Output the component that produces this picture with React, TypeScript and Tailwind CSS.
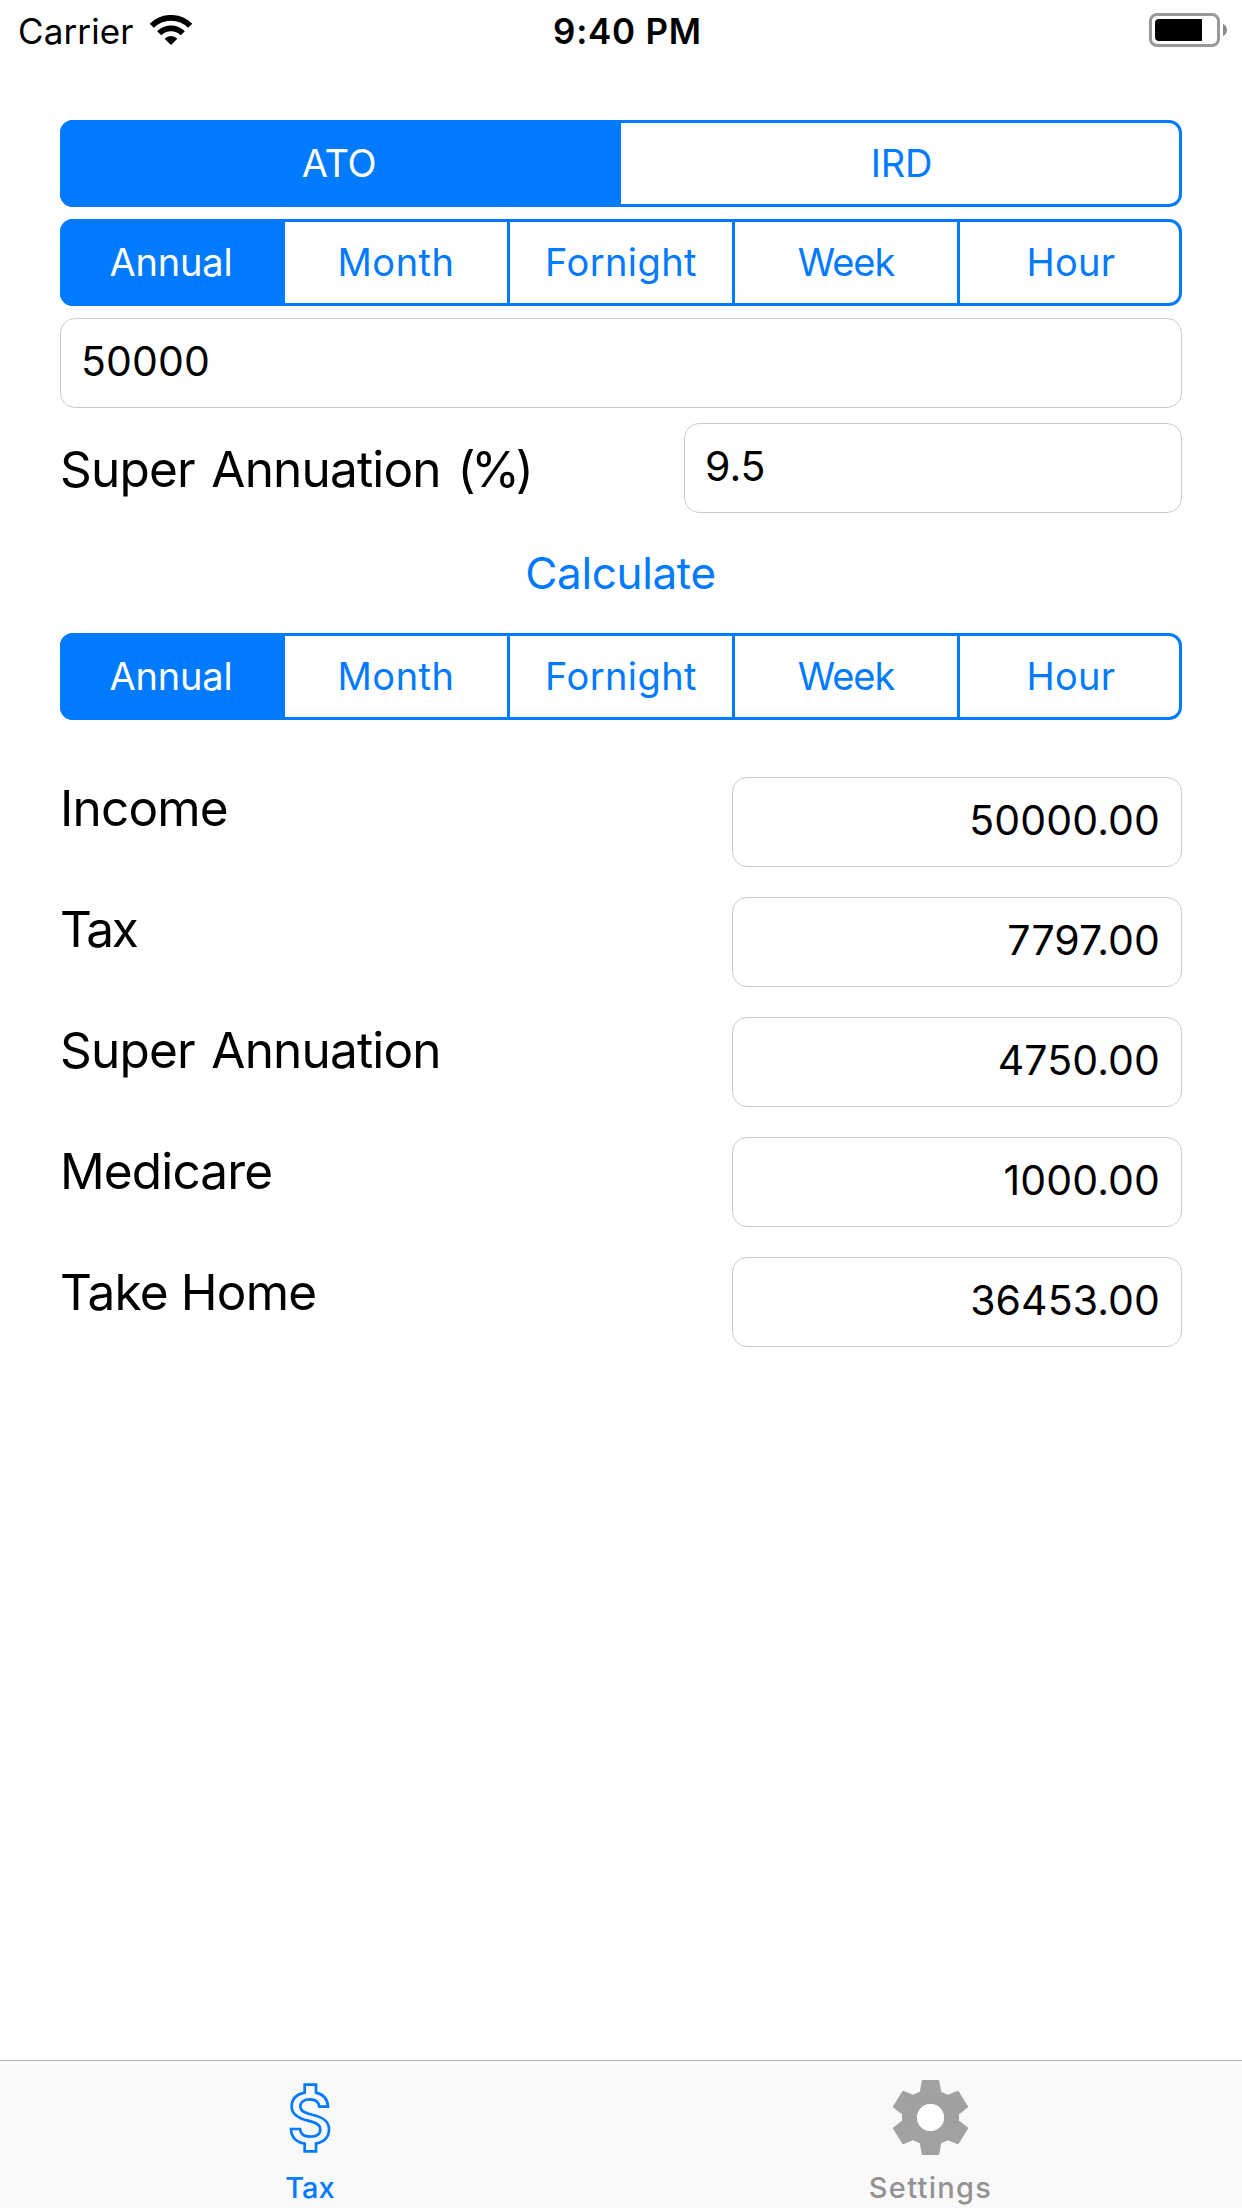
import { Fragment } from "react";
import clsx from "clsx";

type Option = { label: string; tracking: string };

const authorities: Option[] = [
  { label: "ATO", tracking: "tracking-[-0.35px]" },
  { label: "IRD", tracking: "tracking-[-0.2px]" },
];

const periods: Option[] = [
  { label: "Annual", tracking: "tracking-[-0.16px]" },
  { label: "Month", tracking: "tracking-[0.5px]" },
  { label: "Fornight", tracking: "tracking-[0.41px]" },
  { label: "Week", tracking: "tracking-[-1px]" },
  { label: "Hour", tracking: "tracking-[0.27px]" },
];

const results = [
  { label: "Income", value: "50000.00", tracking: "tracking-[-0.8px]" },
  { label: "Tax", value: "7797.00", tracking: "tracking-[-2.2px]" },
  { label: "Super Annuation", value: "4750.00", tracking: "tracking-[-0.82px] [word-spacing:3.5px]" },
  { label: "Medicare", value: "1000.00", tracking: "tracking-[-0.86px]" },
  { label: "Take Home", value: "36453.00", tracking: "tracking-[-0.82px]" },
];

function WifiIcon() {
  return (
    <svg className="h-[30px] w-[42px]" viewBox="0 0 126 90" fill="none" stroke="black" strokeWidth="17.5">
      <path d="M5.4 32.4A81.5 81.5 0 0 1 120.6 32.4" />
      <path d="M27.6 54.6A50 50 0 0 1 98.4 54.6" />
      <path d="M63 90L43.9 70.9A27 27 0 0 1 82.1 70.9Z" fill="black" stroke="none" />
    </svg>
  );
}

function Battery() {
  return (
    <div className="flex items-center gap-[3px]">
      <div className="h-[34px] w-[71px] rounded-[8px] border-[3px] border-[#999999] p-[3px]">
        <div className="h-full w-[47px] rounded-l-[4px] bg-black" />
      </div>
      <svg className="h-3 w-1" viewBox="0 0 4 12">
        <path d="M0 0C5.3 2 5.3 10 0 12Z" fill="#888888" />
      </svg>
    </div>
  );
}

function StatusBar() {
  return (
    <header className="grid h-[62px] grid-cols-[553px_1fr_auto] items-center pr-[15px] text-[35px]">
      <div className="flex items-center pl-[18px]">
        <span className="tracking-[0.13px]">Carrier</span>
        <span className="-mt-0.5 ml-4">
          <WifiIcon />
        </span>
      </div>
      <span className="font-semibold tracking-[0.75px]">9:40 PM</span>
      <div className="-mt-[2px]">
        <Battery />
      </div>
    </header>
  );
}

function Segmented({ options, className }: { options: Option[]; className?: string }) {
  return (
    <div
      className={clsx(
        "flex h-[87px] overflow-hidden rounded-[13px] text-[38px] text-[#007aff] inset-shadow-[0_0_0_3px_#007aff]",
        className,
      )}
    >
      {options.map((option, i) => (
        <Fragment key={option.label}>
          {i > 0 && <div className="w-[3px] shrink-0 bg-[#007aff]" />}
          <button
            className={clsx(
              "flex items-center justify-center",
              options.length === 2 && i === 0 ? "w-[558px]" : "min-w-0 flex-1",
              option.tracking,
              i === 0 && "bg-[#007aff] text-white",
            )}
          >
            {option.label}
          </button>
        </Fragment>
      ))}
    </div>
  );
}

function Field({ value, className }: { value: string; className?: string }) {
  return (
    <div
      className={clsx(
        "flex h-[90px] items-center rounded-[15px] border border-[#cccccc] pr-[21px] pb-0.5 pl-5 text-[41px]",
        className,
      )}
    >
      {value}
    </div>
  );
}

function DollarIcon() {
  return (
    <svg className="h-[72px] w-[44px]" viewBox="146 126 132 216" fill="none" stroke="#007aff" strokeWidth="8">
      <path d="M196 134H230V158C252 163 265 178 266 200H240C238 186 228 178 212 178C194 178 183 186 183 199C183 212 192 217 210 222L221 225C256 233 269 246 269 268C269 292 254 306 230 311V334H196V311C172 307 156 292 155 267H182C184 282 194 290 212 290C232 290 243 282 243 268C243 255 234 249 214 244L206 242C170 233 157 219 157 200C157 178 172 163 196 158Z" />
    </svg>
  );
}

function GearIcon() {
  return (
    <svg className="size-[75px]" viewBox="0 0 225 225">
      <path
        fill="#a1a1a1"
        stroke="#a1a1a1"
        strokeWidth="8"
        strokeLinejoin="round"
        fillRule="evenodd"
        d="M90 4H135L141 38L165 49L194 37L221 80L194 101V124L221 145L194 188L165 176L141 187L135 221H90L84 187L60 176L31 188L4 145L31 124V101L4 80L31 37L60 49L84 38ZM112.5 68A44.5 44.5 0 1 0 112.5 157A44.5 44.5 0 1 0 112.5 68Z"
      />
      <circle cx="112.5" cy="112.5" r="40.5" fill="white" />
    </svg>
  );
}

export default function App() {
  return (
    <div className="flex h-[2208px] w-[1242px] flex-col bg-white font-['Inter',sans-serif] text-black">
      <StatusBar />
      <main className="flex flex-1 flex-col px-[60px] pt-[58px]">
        <Segmented options={authorities} />
        <Segmented options={periods} className="mt-3" />
        <Field value="50000" className="mt-3 tracking-[0.1px]" />
        <div className="mt-[15px] flex items-center justify-between">
          <span className="pt-0.5 text-[49.5px] tracking-[-0.82px] [word-spacing:3.5px]">
            Super Annuation <span className="tracking-[-4.1px]">(%)</span>
          </span>
          <Field value="9.5" className="w-[498px]" />
        </div>
        <button className="h-[120px] pr-px text-[44px] tracking-[-0.35px] text-[#007aff]">Calculate</button>
        <Segmented options={periods} />
        <div className="mt-[57px] flex justify-between">
          <div className="flex flex-col gap-[59px]">
            {results.map((row) => (
              <span key={row.label} className={clsx("text-[49.5px] leading-[62px]", row.tracking)}>
                {row.label}
              </span>
            ))}
          </div>
          <div className="flex w-[450px] flex-col gap-[30px]">
            {results.map((row) => (
              <Field key={row.label} value={row.value} className="justify-end tracking-[0.1px]" />
            ))}
          </div>
        </div>
      </main>
      <nav className="grid h-[148px] grid-cols-2 border-t border-[#b2b2b2] bg-[#f9f9f9] text-[29px] leading-9 font-medium">
        <button className="flex flex-col items-center pt-[19px] pr-px text-[#007aff]">
          <span className="flex h-[75px] items-center">
            <DollarIcon />
          </span>
          <span className="mt-[15px]">Tax</span>
        </button>
        <button className="flex flex-col items-center pt-[19px] pr-0.5 text-[#929292]">
          <GearIcon />
          <span className="mt-[15px] tracking-[1.28px]">Settings</span>
        </button>
      </nav>
    </div>
  );
}
